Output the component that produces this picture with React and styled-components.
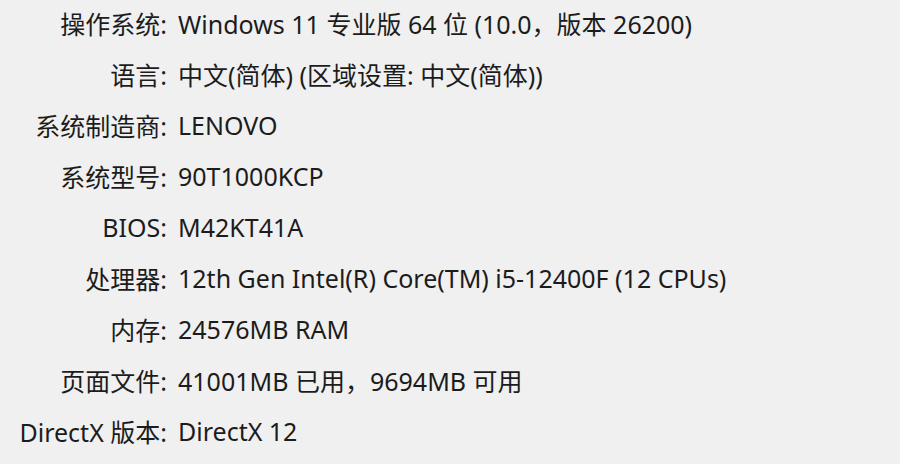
import React from "react";
import styled, { createGlobalStyle } from "styled-components";

const GlobalStyle = createGlobalStyle`
  html, body {
    margin: 0;
    padding: 0;
    background: #f0f0f0;
  }
`;

const Panel = styled.div`
  width: 900px;
  height: 464px;
  overflow: hidden;
  background: #f0f0f0;
  color: #1c1c1c;
  font-family: "Noto Sans", "Noto Sans CJK SC", sans-serif;
  font-size: 25px;
  display: grid;
  grid-template-columns: 167px 1fr;
  grid-auto-rows: 51px;
  column-gap: 11px;
  align-items: center;
  margin-top: -3px;
`;

const Label = styled.div`
  text-align: right;
  white-space: nowrap;
`;

const Value = styled.div`
  white-space: nowrap;
`;

const rows = [
  ["操作系统:", "Windows 11 专业版 64 位 (10.0，版本 26200)"],
  ["语言:", "中文(简体) (区域设置: 中文(简体))"],
  ["系统制造商:", "LENOVO"],
  ["系统型号:", "90T1000KCP"],
  ["BIOS:", "M42KT41A"],
  ["处理器:", "12th Gen Intel(R) Core(TM) i5-12400F (12 CPUs)"],
  ["内存:", "24576MB RAM"],
  ["页面文件:", "41001MB 已用，9694MB 可用"],
  ["DirectX 版本:", "DirectX 12"],
];

export default function App() {
  return (
    <>
      <GlobalStyle />
      <Panel>
        {rows.map(([label, value]) => (
          <React.Fragment key={label}>
            <Label>{label}</Label>
            <Value>{value}</Value>
          </React.Fragment>
        ))}
      </Panel>
    </>
  );
}
